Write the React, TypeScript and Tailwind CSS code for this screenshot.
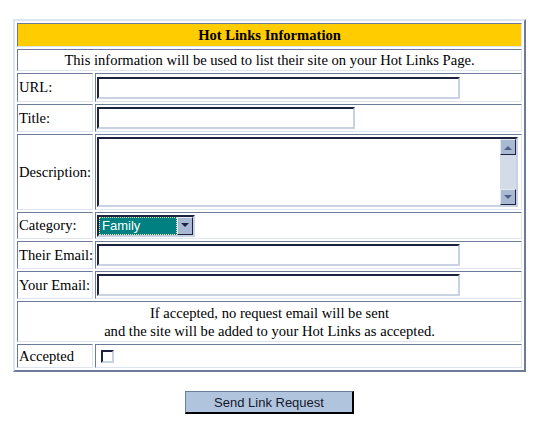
import React from "react";

// old-school hot links form, table layout with ridge borders
const cell =
  "border border-t-[#6b7b99] border-l-[#6b7b99] border-b-[#dfe5ef] border-r-[#dfe5ef] p-0 align-middle";
const field =
  "block h-[22px] bg-white border-2 border-t-[#1c2240] border-l-[#1c2240] border-b-[#c9d2e2] border-r-[#c9d2e2] outline-none px-1 text-[13px]";

function Label({ children }: { children: React.ReactNode }) {
  return <td className={`${cell} whitespace-nowrap pl-[1px] text-left`}>{children}</td>;
}

function ScrollArrow({ up }: { up?: boolean }) {
  return (
    <div className="flex h-[16px] w-[16px] items-center justify-center bg-[#a9b8d3] border border-t-[#e4e9f2] border-l-[#e4e9f2] border-b-[#1c2240] border-r-[#1c2240]">
      <svg width="8" height="5" viewBox="0 0 8 5">
        <path d={up ? "M0 5 L4 1 L8 5 Z" : "M0 0 L4 4 L8 0 Z"} fill="#4f6185" />
      </svg>
    </div>
  );
}

export default function App() {
  return (
    <div className="min-h-screen bg-white pt-[19px] text-[14.6px] leading-[17px] text-black" style={{ fontFamily: '"Liberation Serif", "Times New Roman", serif' }}>
      <table className="mx-auto w-[513px] table-fixed border-separate border-spacing-[2px] border-2 border-t-[#dfe5ef] border-l-[#dfe5ef] border-b-[#6b7b99] border-r-[#6b7b99]">
        <colgroup>
          <col className="w-[76px]" />
          <col />
        </colgroup>
        <tbody>
          <tr>
            <td colSpan={2} className={`${cell} h-[24px] bg-[#ffcc00] text-center font-bold`}>
              Hot Links Information
            </td>
          </tr>
          <tr>
            <td colSpan={2} className={`${cell} h-[22px] text-center`}>
              This information will be used to list their site on your Hot Links Page.
            </td>
          </tr>
          <tr>
            <Label>URL:</Label>
            <td className={`${cell} h-[29px] pl-[1px]`}>
              <input className={`${field} w-[363px]`} />
            </td>
          </tr>
          <tr>
            <Label>Title:</Label>
            <td className={`${cell} h-[28px] pl-[1px]`}>
              <input className={`${field} w-[258px]`} />
            </td>
          </tr>
          <tr>
            <Label>Description:</Label>
            <td className={`${cell} h-[76px] pl-[1px]`}>
              <div className="flex h-[70px] w-[421px] bg-white border-2 border-t-[#1c2240] border-l-[#1c2240] border-b-[#c9d2e2] border-r-[#c9d2e2]">
                <textarea className="flex-1 resize-none overflow-hidden px-1 text-[13px] outline-none" />
                <div className="flex w-[16px] flex-col justify-between bg-[#d3dbe9]">
                  <ScrollArrow up />
                  <ScrollArrow />
                </div>
              </div>
            </td>
          </tr>
          <tr>
            <Label>Category:</Label>
            <td className={`${cell} h-[27px] pl-[1px]`}>
              <div className="flex h-[22px] w-[98px] border-2 border-t-[#1c2240] border-l-[#1c2240] border-b-[#c9d2e2] border-r-[#c9d2e2] bg-white" style={{ fontFamily: '"Liberation Sans", Arial, sans-serif' }}>
                <div className="flex flex-1 items-center border border-dotted border-[#e0e0a0] bg-[#008080] pl-[2px] text-[13px] leading-none text-white">
                  Family
                </div>
                <div className="flex w-[16px] items-center justify-center bg-[#a9b8d3] border border-t-[#e4e9f2] border-l-[#e4e9f2] border-b-[#1c2240] border-r-[#1c2240]">
                  <svg width="8" height="5" viewBox="0 0 8 5">
                    <path d="M0 0 L4 4 L8 0 Z" fill="#1c2240" />
                  </svg>
                </div>
              </div>
            </td>
          </tr>
          <tr>
            <Label>Their Email:</Label>
            <td className={`${cell} h-[28px] pl-[1px]`}>
              <input className={`${field} w-[363px]`} />
            </td>
          </tr>
          <tr>
            <Label>Your Email:</Label>
            <td className={`${cell} h-[28px] pl-[1px]`}>
              <input className={`${field} w-[363px]`} />
            </td>
          </tr>
          <tr>
            <td colSpan={2} className={`${cell} h-[41px] text-center leading-[18px]`}>
              If accepted, no request email will be sent
              <br />
              and the site will be added to your Hot Links as accepted.
            </td>
          </tr>
          <tr>
            <Label>Accepted</Label>
            <td className={`${cell} h-[24px] pl-[5px]`}>
              <div className="h-[13px] w-[13px] bg-white border-2 border-t-[#1c2240] border-l-[#1c2240] border-b-[#c9d2e2] border-r-[#c9d2e2]" />
            </td>
          </tr>
        </tbody>
      </table>
      <div className="mt-[19px] flex justify-center">
        <button
          className="h-[23px] w-[169px] bg-[#b0c4de] border border-t-[#6b7b99] border-l-[#6b7b99] border-b-2 border-r-2 border-b-black border-r-black text-[13px] text-[#15182a]"
          style={{ fontFamily: '"Liberation Sans", Arial, sans-serif' }}
        >
          Send Link Request
        </button>
      </div>
    </div>
  );
}
